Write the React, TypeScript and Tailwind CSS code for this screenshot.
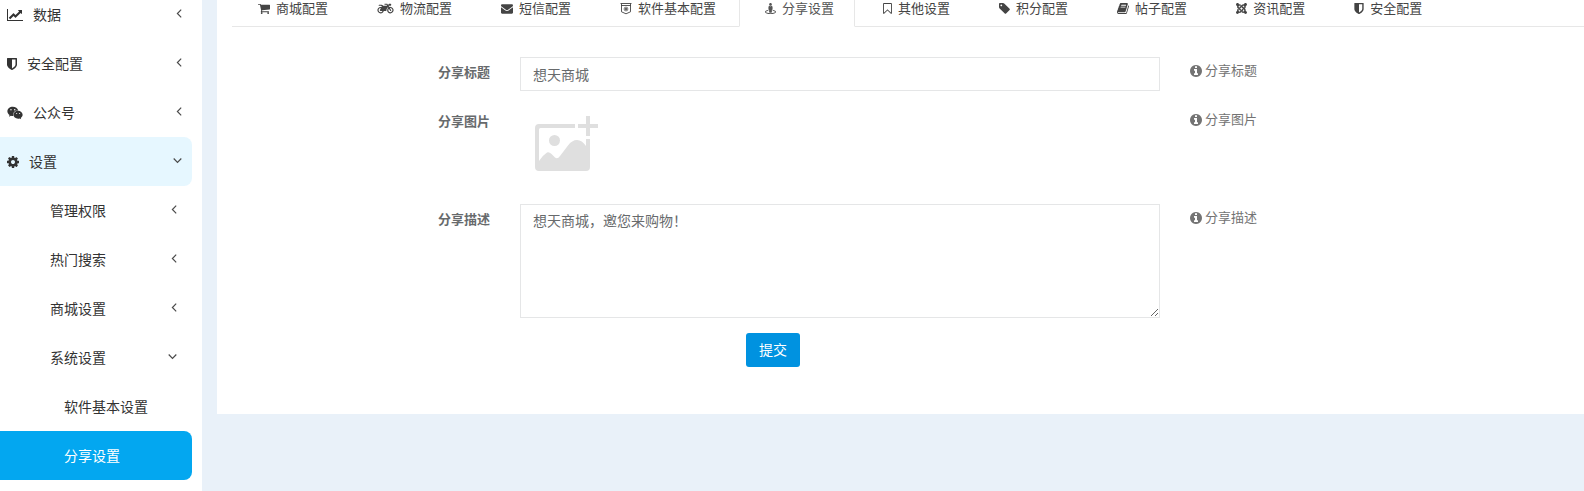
import type { ReactNode } from "react";
import { FaJoomla, FaMotorcycle, FaStreetView, FaWeixin } from "react-icons/fa";

const SHIELD = "M1344 960v-640h-448v1137q119-63 213-137 235-184 235-360zM1536 192v768q0 86-33.5 170.5t-83 150-118 127.5-126.5 103-121 77.5-89.5 49.5-42.5 20q-12 6-26 6t-26-6q-16-7-42.5-20t-89.5-49.5-121-77.5-126.5-103-118-127.5-83-150-33.5-170.5v-768q0-26 19-45t45-19h1152q26 0 45 19t19 45z";
const CHART = "M2048 1536v128h-2048v-1536h128v1408h1920zM1920 288v435q0 21-19.5 29.5t-35.5-7.5l-121-121-633 633q-10 10-23 10t-23-10l-233-233-416 416-192-192 585-585q10-10 23-10t23 10l233 233 464-464-121-121q-16-16-7.5-35.5t29.5-19.5h435q14 0 23 9t9 23z";
const COG = "M1024 896q0-106-75-181t-181-75-181 75-75 181 75 181 181 75 181-75 75-181zm512-109v222q0 12-8 23t-20 13l-185 28q-19 54-39 91 35 50 107 138 10 12 10 25t-9 23q-27 37-99 108t-94 71q-12 0-26-9l-138-108q-44 23-91 38-16 136-29 186-7 28-36 28h-222q-14 0-24.5-8.5t-11.5-21.5l-28-184q-49-16-90-37l-141 107q-10 9-25 9-14 0-25-11-126-114-165-168-7-10-7-23 0-12 8-23 15-21 51-66.5t54-70.5q-27-50-41-99l-183-27q-13-2-21-12.5t-8-23.5v-222q0-12 8-23t19-13l186-28q14-46 39-92-40-57-107-138-10-12-10-24 0-10 9-23 26-36 98.5-107.5t94.5-71.5q13 0 26 10l138 107q44-23 91-38 16-136 29-186 7-28 36-28h222q14 0 24.5 8.5t11.5 21.5l28 184q49 16 90 37l142-107q9-9 24-9 13 0 25 10 129 119 165 170 7 8 7 22 0 12-8 23-15 21-51 66.5t-54 70.5q26 50 41 98l183 28q13 2 21 12.5t8 23.5z";
const CART = "M640 1536q0 52-38 90t-90 38-90-38-38-90 38-90 90-38 90 38 38 90zm896 0q0 52-38 90t-90 38-90-38-38-90 38-90 90-38 90 38 38 90zm128-1088v512q0 24-16.5 42.5t-40.5 21.5l-1044 122q13 60 13 70 0 16-24 64h920q26 0 45 19t19 45-19 45-45 19h-1024q-26 0-45-19t-19-45q0-11 8-31.5t16-36 21.5-40 15.5-29.5l-177-823h-204q-26 0-45-19t-19-45 19-45 45-19h256q16 0 28.5 6.5t19.5 15.5 13 24.5 8 26 5.5 29.5 4.5 26h1201q26 0 45 19t19 45z";
const ENVELOPE = "M1792 710v794q0 66-47 113t-113 47h-1472q-66 0-113-47t-47-113v-794q44 49 101 87 362 246 497 345 57 42 92.5 65.5t94.5 48 110 24.5h2q51 0 110-24.5t94.5-48 92.5-65.5q170-123 498-345 57-39 100-87zm0-294q0 79-49 151t-122 123q-376 261-468 325-10 7-42.5 31t-54 38.5-52 32.5-57.5 27-50 9h-2q-23 0-50-9t-57.5-27-52-32.5-54-38.5-42.5-31q-91-64-262-182.5t-205-142.5q-62-42-117-115.5t-55-136.5q0-78 41.5-130t118.5-52h1472q65 0 112.5 47t47.5 113z";
const BOOKMARK = "M1152 256h-1024v1242l423-406 89-85 89 85 423 406v-1242zm12-128q23 0 44 9 33 13 52.5 41t19.5 62v1289q0 34-19.5 62t-52.5 41q-19 8-44 8-48 0-83-32l-441-424-441 424q-36 33-83 33-23 0-44-9-33-13-52.5-41t-19.5-62v-1289q0-34 19.5-62t52.5-41q21-9 44-9h1048z";
const TAG = "M448 448q0-53-37.5-90.5t-90.5-37.5-90.5 37.5-37.5 90.5 37.5 90.5 90.5 37.5 90.5-37.5 37.5-90.5zm1067 576q0 53-37 90l-491 492q-39 37-91 37-53 0-90-37l-715-716q-38-37-64.5-101t-26.5-117v-416q0-52 38-90t90-38h416q53 0 117 26.5t102 64.5l715 714q37 39 37 91z";
const BOOK = "M1639 478q40 57 18 129l-275 906q-19 64-76.5 107.5t-122.5 43.5h-923q-77 0-148.5-53.5t-99.5-131.5q-24-67-2-127 0-4 3-27t4-37q1-8-3-21.5t-3-19.5q2-11 8-21t16.5-23.5 16.5-23.5q23-38 45-91.5t30-91.5q3-10 .5-30t-.5-28q3-11 17-28t17-23q21-36 42-92t25-90q1-9-2.5-32t.5-28q4-13 22-30.5t22-22.5q19-26 42.5-84.5t27.5-96.5q1-8-3-25.5t-2-26.5q2-8 9-18t18-23 17-21q8-12 16.5-30.5t15-35 16-36 19.5-32 26.5-23.5 36-11.5 47.5 5.5l-1 3q38-9 51-9h761q74 0 114 56t18 130l-274 906q-36 119-71.5 153.5t-128.5 34.5h-869q-27 0-38 15-11 16-1 43 24 70 144 70h923q29 0 56-15.5t35-41.5l300-987q7-22 5-57 38 15 59 43zm-1064 2q-4 13 2 22.5t20 9.5h608q13 0 25.5-9.5t16.5-22.5l21-64q4-13-2-22.5t-20-9.5h-608q-13 0-25.5 9.5t-16.5 22.5zm-83 256q-4 13 2 22.5t20 9.5h608q13 0 25.5-9.5t16.5-22.5l21-64q4-13-2-22.5t-20-9.5h-608q-13 0-25.5 9.5t-16.5 22.5z";
const INFO = "M1024 1376v-160q0-14-9-23t-23-9h-96v-512q0-14-9-23t-23-9h-320q-14 0-23 9t-9 23v160q0 14 9 23t23 9h96v320h-96q-14 0-23 9t-9 23v160q0 14 9 23t23 9h448q14 0 23-9t9-23zm-128-896v-160q0-14-9-23t-23-9h-192q-14 0-23 9t-9 23v160q0 14 9 23t23 9h192q14 0 23-9t9-23zm640 416q0 209-103 385.5t-279.5 279.5-385.5 103-385.5-103-279.5-279.5-103-385.5 103-385.5 279.5-279.5 385.5-103 385.5 103 279.5 279.5 103 385.5z";

function Glyph({ d, box, className }: { d: string; box: string; className: string }) {
  return <svg viewBox={box} className={`shrink-0 fill-current ${className}`} aria-hidden="true"><path d={d} /></svg>;
}

function BadgeIcon() {
  return (
    <svg viewBox="0 0 12 13" className="h-[13px] w-3 shrink-0" fill="none" stroke="currentColor" aria-hidden="true">
      <path d="M0.500 1.500h11M1 3.500h10M1.500 1.500v8.300l4.500 2l4.500-2v-8.300" strokeWidth="0.9" />
      <circle cx="6" cy="7" r="1.900" strokeWidth="0.700" />
      <circle cx="6" cy="7" r="1.100" fill="currentColor" stroke="none" />
    </svg>
  );
}

function Chevron({ open }: { open?: boolean }) {
  return (
    <svg viewBox="0 0 9 9" className="mb-[3px] ml-auto size-[9px] shrink-0 text-[#4a4a4a]" fill="none" stroke="currentColor" strokeWidth="1.2" aria-hidden="true">
      <path d={open ? "M0.7 2.5L4.5 6.3L8.3 2.5" : "M8.2 0.7L4.4 4.5L8.2 8.3"} />
    </svg>
  );
}

/* ─── Sidebar ─── */

type MenuItem = { label: string; level: 1 | 2 | 3; icon?: ReactNode; state?: "open" | "closed"; tone?: string };

const MENU: MenuItem[] = [
  { label: "数据", level: 1, state: "closed", icon: <Glyph d={CHART} box="0 0 2048 1792" className="h-3.5 w-4" /> },
  { label: "安全配置", level: 1, state: "closed", icon: <Glyph d={SHIELD} box="256 0 1280 1792" className="h-3.5 w-2.5" /> },
  { label: "公众号", level: 1, state: "closed", icon: <FaWeixin className="size-4 shrink-0" /> },
  { label: "设置", level: 1, state: "open", tone: "bg-[#e6f7ff]", icon: <Glyph d={COG} box="0 0 1536 1792" className="h-3.5 w-3" /> },
  { label: "管理权限", level: 2, state: "closed" },
  { label: "热门搜索", level: 2, state: "closed" },
  { label: "商城设置", level: 2, state: "closed" },
  { label: "系统设置", level: 2, state: "open" },
  { label: "软件基本设置", level: 3 },
  { label: "分享设置", level: 3, tone: "bg-[#03a7f0] text-white" },
];

const INDENT = { 1: "pl-[7px] pr-[10px]", 2: "pl-[50px] pr-[15px]", 3: "pl-[64px] pr-[15px]" };

function Sidebar() {
  return (
    <nav className="w-[202px] shrink-0 overflow-hidden bg-white pr-[10px]">
      <ul className="-mt-[10px]">
        {MENU.map(m => (
          <li key={m.label}>
            <a href="#" className={`flex h-[49px] items-center gap-[10px] rounded-r-lg text-sm ${INDENT[m.level]} ${m.tone ?? ""}`}>
              {m.icon}
              <span>{m.label}</span>
              {m.state && <Chevron open={m.state === "open"} />}
            </a>
          </li>
        ))}
      </ul>
    </nav>
  );
}

/* ─── Tabs ─── */

const TABS: { label: string; icon: ReactNode; active?: boolean }[] = [
  { label: "商城配置", icon: <Glyph d={CART} box="0 0 1664 1792" className="h-[13px] w-3" /> },
  { label: "物流配置", icon: <FaMotorcycle className="h-[13px] w-[17px] shrink-0" /> },
  { label: "短信配置", icon: <Glyph d={ENVELOPE} box="0 0 1792 1792" className="h-[13px] w-3" /> },
  { label: "软件基本配置", icon: <BadgeIcon /> },
  { label: "分享设置", icon: <FaStreetView className="h-[13px] w-[11px] shrink-0" />, active: true },
  { label: "其他设置", icon: <Glyph d={BOOKMARK} box="0 0 1280 1792" className="h-[13px] w-[9px]" /> },
  { label: "积分配置", icon: <Glyph d={TAG} box="0 0 1536 1792" className="h-[13px] w-[11px]" /> },
  { label: "帖子配置", icon: <Glyph d={BOOK} box="0 0 1664 1792" className="h-[13px] w-3" /> },
  { label: "资讯配置", icon: <FaJoomla className="h-[13px] w-[11px] shrink-0" /> },
  { label: "安全配置", icon: <Glyph d={SHIELD} box="256 0 1280 1792" className="h-[13px] w-[10px]" /> },
];

function Tabs() {
  return (
    <ul className="flex border-b border-[#e7e7e7] text-[13px] leading-4 text-[#444]">
      {TABS.map(t => (
        <li key={t.label} className="mr-0.5 -mb-px shrink-0">
          <a
            href="#"
            className={`flex items-center gap-1.5 border-x border-b pr-5 pb-[10px] pl-[25px] ${t.active ? "border-[#e7e7e7] border-b-white bg-white text-[#555]" : "border-transparent"}`}
          >
            {t.icon}
            <span>{t.label}</span>
          </a>
        </li>
      ))}
    </ul>
  );
}

/* ─── Form ─── */

const ROW = "grid grid-cols-[258px_minmax(0,640fr)_minmax(0,394fr)] gap-x-[30px]";
const FIELD = "block w-full border border-[#e5e6e7] bg-white px-3 py-1.5 text-sm leading-5 text-[#676a6c] outline-none";

function Row({ id, label, children }: { id: string; label: string; children: ReactNode }) {
  return (
    <div className={ROW}>
      <label htmlFor={id} className="pt-[5px] text-right text-[13px] leading-5 font-bold">{label}</label>
      <div>{children}</div>
      <p className="flex h-7 items-center gap-[3px] text-[13px] text-[#737373]">
        <Glyph d={INFO} box="0 0 1536 1792" className="h-3.5 w-3" />
        {label}
      </p>
    </div>
  );
}

function UploadIcon() {
  return (
    <svg viewBox="0 0 63 55" className="h-[55px] w-[63px] fill-[#dfdfdf]" aria-hidden="true">
      <path fillRule="evenodd" d="M4 8H40V12H5.500Q4 12 4 13.500V45Q8 39 12 36.500Q14 35.500 16.500 38L20 41.500Q22.500 43.500 25 40L33 29.500Q37 24 42 24Q47 24 51 30V23H55V51Q55 55 51 55H4Q0 55 0 51V12Q0 8 4 8Z" />
      <circle cx="19.500" cy="24.500" r="5.500" />
      <path d="M51 0h4v8h8v4h-8v8h-4v-8h-8v-4h8z" />
    </svg>
  );
}

function ShareForm() {
  return (
    <form className="flex flex-col gap-[15px] pt-[30px] pb-[47px] text-[#676a6c]" onSubmit={e => e.preventDefault()}>
      <Row id="title" label="分享标题">
        <input id="title" type="text" defaultValue="想天商城" className={`h-[34px] ${FIELD}`} />
      </Row>
      <Row id="image" label="分享图片">
        <button id="image" type="button" className="block h-[83px] pt-[10px] pb-[18px] pl-[15px]"><UploadIcon /></button>
      </Row>
      <Row id="desc" label="分享描述">
        <textarea id="desc" defaultValue="想天商城，邀您来购物！" className={`h-[114px] resize ${FIELD}`} />
      </Row>
      <div className={ROW}>
        <div className="col-start-2 pl-[35.3%]">
          <button type="submit" className="block h-[34px] rounded-[3px] bg-[#0092e0] px-[13px] text-sm text-white">提交</button>
        </div>
      </div>
    </form>
  );
}

export default function App() {
  return (
    <div className="flex min-h-screen bg-[#e9f1f9] font-['Open_Sans','Noto_Sans_CJK_SC',sans-serif] text-[#333]">
      <Sidebar />
      <main className="min-w-0 flex-1 pl-[15px]">
        <section className="bg-white pl-[15px]">
          <Tabs />
          <ShareForm />
        </section>
      </main>
    </div>
  );
}
